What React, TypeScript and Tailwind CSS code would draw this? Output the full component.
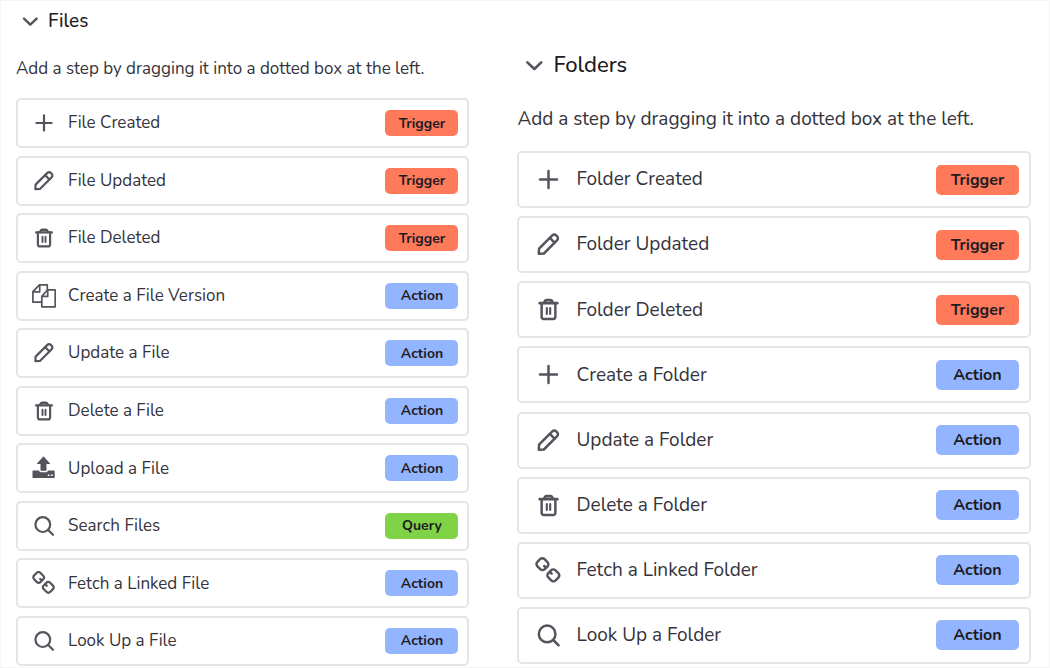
import React, {useState} from "react";
import clsx from "clsx";

type StepKind = 'Trigger' | 'Action' | 'Query'
type IconName = 'plus' | 'pencil' | 'trash' | 'copy' | 'upload' | 'search' | 'link'

interface Step {
    name: string
    icon: IconName
    kind: StepKind
}

const fileSteps: Step[] = [
    {name: 'File Created', icon: 'plus', kind: 'Trigger'},
    {name: 'File Updated', icon: 'pencil', kind: 'Trigger'},
    {name: 'File Deleted', icon: 'trash', kind: 'Trigger'},
    {name: 'Create a File Version', icon: 'copy', kind: 'Action'},
    {name: 'Update a File', icon: 'pencil', kind: 'Action'},
    {name: 'Delete a File', icon: 'trash', kind: 'Action'},
    {name: 'Upload a File', icon: 'upload', kind: 'Action'},
    {name: 'Search Files', icon: 'search', kind: 'Query'},
    {name: 'Fetch a Linked File', icon: 'link', kind: 'Action'},
    {name: 'Look Up a File', icon: 'search', kind: 'Action'},
]

const folderSteps: Step[] = [
    {name: 'Folder Created', icon: 'plus', kind: 'Trigger'},
    {name: 'Folder Updated', icon: 'pencil', kind: 'Trigger'},
    {name: 'Folder Deleted', icon: 'trash', kind: 'Trigger'},
    {name: 'Create a Folder', icon: 'plus', kind: 'Action'},
    {name: 'Update a Folder', icon: 'pencil', kind: 'Action'},
    {name: 'Delete a Folder', icon: 'trash', kind: 'Action'},
    {name: 'Fetch a Linked Folder', icon: 'link', kind: 'Action'},
    {name: 'Look Up a Folder', icon: 'search', kind: 'Action'},
]

const kindColors: Record<StepKind, string> = {
    Trigger: 'bg-[#ff795b]',
    Action: 'bg-[#93b4ff]',
    Query: 'bg-[#80d346]',
}

const iconShapes: Record<IconName, React.ReactNode> = {
    plus: <path d="M4.4 12h15.2M12 4.4v15.2"/>,
    pencil: <>
        <path d="M3.4 20.2l.2-4.6L15.4 3.9a2.4 2.4 0 0 1 3.4 0l.9.9a2.4 2.4 0 0 1 0 3.4L7.9 20z"/>
        <path d="M13.2 6.2l4.2 4.2"/>
    </>,
    trash: <>
        <path d="M4.2 6.4h15.6" strokeWidth="2.4"/>
        <path d="M8.2 6l.5-1.2q.5-1.1 1.5-1.1h3.6q1 0 1.5 1.1l.5 1.2" strokeWidth="2.4"/>
        <path d="M5.9 6.4v12.2a1.8 1.8 0 0 0 1.8 1.8h8.6a1.8 1.8 0 0 0 1.8-1.8V6.4"/>
        <path d="M10.5 10.8v5.2M13.5 10.8v5.2" strokeWidth="1.9"/>
    </>,
    copy: <g strokeWidth="1.7" strokeLinejoin="round" strokeLinecap="butt">
        <path d="M9.6 18.2H.9V7.6L7.4.9h7.9v4.6"/>
        <path d="M7.7 1v6.8H1"/>
        <path d="M9.8 12.4l5.8-6.6h7.6v17H9.8z"/>
        <path d="M15.7 5.8v6.6H9.9"/>
    </g>,
    upload: <g fill="currentColor" stroke="none">
        <path d="M11.1.8q.4-.4.8 0l6 6.4q.5.8-.4.9h-3v5.8q0 .9-.9.9H9.4q-.9 0-.9-.9V8.1h-3q-.9-.1-.4-.9z"/>
        <path fillRule="evenodd" d="M1.3 14.4h5.8q.3 1.9 2 1.9h4.8q1.7 0 2-1.9h6q.8 0 .8.8v6q0 .8-.8.8H1.3q-.8 0-.8-.8v-6q0-.8.8-.8zM15.8 18.4v1.7h1.7v-1.7zM19 18.4v1.7h1.7v-1.7z"/>
    </g>,
    search: <>
        <circle cx="10.8" cy="10.6" r="7.4"/>
        <path d="M16.2 16l4.8 4.8"/>
    </>,
    link: <>
        <rect x="2" y="1.9" width="9.2" height="9" rx="2.8" transform="rotate(45 6.6 6.4)"/>
        <rect x="11.7" y="11.8" width="9.2" height="9" rx="2.8" transform="rotate(45 16.3 16.3)"/>
        <path d="M8.2 8l1.4 1.4M13.4 13.4l1.4 1.4"/>
    </>,
}

function StepIcon({ name, large }: { name: IconName, large: boolean }) {
    return (
        <svg viewBox="0 0 24 24"
             className={clsx("shrink-0 text-[#55535c]", large ? "size-[27px]" : "size-6")}
             fill="none"
             stroke="currentColor"
             strokeWidth="2.2"
             strokeLinecap="round"
             strokeLinejoin="round"
             aria-hidden="true">
            {iconShapes[name]}
        </svg>
    )
}

interface StepGroupProps {
    title: string
    steps: Step[]
    large?: boolean
}

function StepGroup({ title, steps, large = false }: StepGroupProps) {
    const [open, setOpen] = useState(true)

    return (
        <section className={clsx("flex flex-col", large ? "pt-12 pb-[3px]" : "pt-[6px] pb-px")}>
            <h2 className={clsx("font-medium text-[#1d1b22]", large ? "px-[6px] text-[22px] leading-8" : "px-1 text-[19px] leading-7")}>
                <button type="button"
                        aria-expanded={open}
                        onClick={() => setOpen(!open)}
                        className="flex items-center gap-2">
                    <svg viewBox="0 0 20 20"
                         className={clsx("text-[#55535c]", large ? "size-[22px]" : "size-5", !open && "-rotate-90")}
                         fill="none"
                         stroke="currentColor"
                         strokeWidth="2.4"
                         strokeLinecap="round"
                         strokeLinejoin="round"
                         aria-hidden="true">
                        <path d="M4 7.6l6.3 6 6.3-6"/>
                    </svg>
                    {title}
                </button>
            </h2>

            {open && <>
                <p className={clsx("text-[#35333b]", large ? "mt-6 mb-[18px] text-[19px] leading-7" : "mt-[22px] mb-[17px] text-[17px] leading-6")}>
                    Add a step by dragging it into a dotted box at the left.
                </p>
                <ul className="flex flex-1 flex-col justify-between">
                    {steps.map(step =>
                        <li key={step.name}
                            draggable
                            className={clsx("flex cursor-grab items-center rounded-[5px] border-2 border-[#e5e5e6] text-[#35333b]",
                                large ? "h-[57px] pr-[10px] pl-4 text-[19px]" : "h-[50px] pr-[9px] pl-[14px] text-[17px]")}>
                            <StepIcon name={step.icon} large={large}/>
                            <span className={large ? "ml-[14px]" : "ml-3"}>{step.name}</span>
                            <span className={clsx("ml-auto flex items-center justify-center rounded-[5px] font-bold text-[#1d1b22]",
                                large ? "h-[30px] w-[83px] text-[16px]" : "h-[26px] w-[73px] text-[14px]",
                                kindColors[step.kind])}>
                                {step.kind}
                            </span>
                        </li>)}
                </ul>
            </>}
        </section>
    )
}

export default function App() {
    return (
        <main className="grid min-h-screen grid-cols-[453fr_513fr] gap-12 border border-[#f5f5f5] bg-white pr-[18px] pl-[15px] font-['Nunito','Lato',sans-serif]">
            <StepGroup title="Files" steps={fileSteps}/>
            <StepGroup title="Folders" steps={folderSteps} large/>
        </main>
    )
}
